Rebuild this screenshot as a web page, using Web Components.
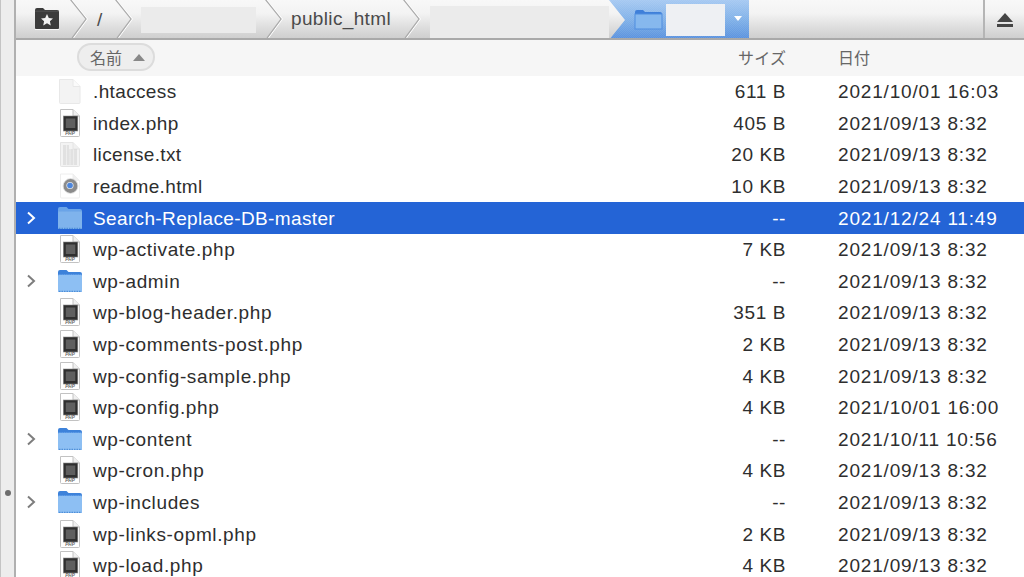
<!DOCTYPE html>
<html><head><meta charset="utf-8"><title>Files</title>
<style>html,body{margin:0;height:577px;overflow:hidden;background:#fff}</style></head>
<body><ftp-browser></ftp-browser>
<script>
const SANS='"Liberation Sans",Arial,"Noto Sans CJK JP",sans-serif';
class FileIcon extends HTMLElement{
  connectedCallback(){
    const t=this.getAttribute('type')||'blank';
    const doc=(fill,stroke,top,bot)=>`<path d="M3.5 ${top}H16L22.5 ${top+6.5}V${bot-1}Q22.5 ${bot} 21.5 ${bot}H4.5Q3.5 ${bot} 3.5 ${bot-1}Z" fill="${fill}" stroke="${stroke}"/><path d="M16 ${top}V${top+6.5}H22.5" fill="#f0f0f0" stroke="${stroke}"/>`;
    let body='';
    if(t==='blank') body=`<path d="M2.5 3.5H16L23 10.5V26.5Q23 27.5 22 27.5H3.5Q2.5 27.5 2.5 26.5Z" fill="#f3f3f3" stroke="#e8e8e8"/><path d="M16 3.5V10.5H23" fill="#fbfbfb" stroke="#e8e8e8"/>`;
    if(t==='php') body=doc('#fff','#c2c2c2',1.5,28.5)+`<rect x="6.3" y="8" width="14.5" height="15" fill="#2f2f2f" stroke="#8a8a8a" stroke-width=".6"/><rect x="8.8" y="10.5" width="9.5" height="9.5" fill="#5f5f5f"/><text x="13" y="27" font-size="4.6" font-family="Liberation Sans" font-weight="700" font-style="italic" fill="#666" text-anchor="middle">PHP</text>`;
    if(t==='txt') body=doc('#f3f3f3','#e4e4e4',3.5,27.5)+[7,9,11,13,15,17,19,21,23,25].map((y,i)=>`<path d="M6 ${y}H${i<2?12:20}" stroke="#cfcfcf" stroke-width="1" stroke-dasharray="3 .7"/>`).join('');
    if(t==='html') body=doc('#fff','#eeeeee',3,27)+`<circle cx="13.5" cy="15" r="7.2" fill="#8b8b8b"/><circle cx="13.5" cy="15" r="7.4" fill="none" stroke="#d2d2d2" stroke-width=".7"/><circle cx="13" cy="14.5" r="3.6" fill="#dfe5ec"/><circle cx="13" cy="14.5" r="2.8" fill="#4d86dc"/>`;
    if(t==='folder'||t==='folder-sel'){
      const s=t==='folder-sel';
      body=`<path d="M1 6Q1 4 3 4H9.5L11.5 6H23Q25 6 25 8V24.5Q25 26 23.5 26H2.5Q1 26 1 24.5Z" fill="${s?'#6aa4e8':'#3d82da'}"/>
      <rect x="1" y="8.5" width="24" height="17.5" rx="1.5" fill="${s?'#7fb3ec':'#8dbff3'}"/>
      <path d="M1 8.5H25" stroke="${s?'#74aae8':'#4f90e2'}" stroke-dasharray="1.5 .8"/>
      <path d="M2 25.3H24" stroke="#4f8fd8" stroke-width="1.2" stroke-dasharray="1.5 1"/>`;
    }
    this.attachShadow({mode:'open'}).innerHTML=`<style>:host{display:block;width:26px;height:31px}svg{display:block}</style><svg width="26" height="31" viewBox="0 0 26 31">${body}</svg>`;
  }
}
class FileRow extends HTMLElement{
  connectedCallback(){
    const a=n=>this.getAttribute(n)||'';
    const sel=this.hasAttribute('selected'),dir=this.hasAttribute('dir');
    const ls=this.textContent.startsWith('wp-')?.62:.36;
    this.attachShadow({mode:'open'}).innerHTML=`<style>
      :host{display:flex;align-items:center;height:31.6px;color:${sel?'#fff':'#2e2e2e'};background:${sel?'#2464d6':'transparent'};font:19px ${SANS};white-space:nowrap}
      .arrow{width:25px;flex:none;display:flex;justify-content:center;padding-left:4px;box-sizing:border-box}
      file-icon{flex:none;margin:0 10px 0 16px}
      .name,.size,.date{padding-top:1px}
      .name{flex:1;letter-spacing:${ls}px}
      .size{width:137px;text-align:right;flex:none;letter-spacing:.6px}
      .date{width:238px;padding-left:52px;flex:none;box-sizing:border-box;letter-spacing:.82px}
      svg{display:block}
    </style>
    <div class="arrow">${dir?`<svg width="10" height="14" viewBox="0 0 10 14"><path d="M2 1.5L8 7L2 12.5" fill="none" stroke="${sel?'#fff':'#7d7d7d'}" stroke-width="2"/></svg>`:'<svg width="10" height="14"></svg>'}</div>
    <file-icon type="${a('icon')}"></file-icon>
    <span class="name"><slot></slot></span><span class="size">${a('size')}</span><span class="date">${a('date')}</span>`;
  }
}
class PathCrumb extends HTMLElement{
  connectedCallback(){
    this.attachShadow({mode:'open'}).innerHTML=`<style>
      :host{display:flex;align-items:center;flex:none;height:100%;font:19px ${SANS};color:#4a4a4a;letter-spacing:.35px}
      .c{flex:1;display:flex;align-items:center;min-width:0;height:100%}
      svg{flex:none;display:block}
    </style><div class="c"><slot></slot></div>
    <svg width="20" height="39" viewBox="0 0 20 39"><path d="M2 0L18.5 20L4.5 39" fill="none" stroke="#fff" stroke-width="1" transform="translate(1 0)"/><path d="M2 0L18 20L4 39" fill="none" stroke="#a9a9a9" stroke-width="1.2"/></svg>`;
  }
}
class PathBar extends HTMLElement{
  connectedCallback(){
    this.attachShadow({mode:'open'}).innerHTML=`<style>
      :host{display:flex;height:40px;box-sizing:border-box;border-bottom:2px solid #a9a9a9;background:linear-gradient(#f8f8f8,#f3f3f3 35%,#dcdcdc 75%,#cfcfcf);overflow:hidden}
      .blue{flex:none;width:140px;height:40px;background:repeating-conic-gradient(#ffffff14 0 25%,#0000 0 50%) 0 0/2px 2px,linear-gradient(#a6c9f2,#7fb0e8 50%,#5790de);clip-path:polygon(0 0,100% 0,100% 100%,0 100%,16px 50%);display:flex;align-items:center;box-sizing:border-box;padding-left:25px}
      .blue svg{flex:none}
      .blue .m{width:59px;height:32px;background:#eef0f3;margin-left:3px;flex:none}
      .drop{width:0;height:0;border:4px solid transparent;border-top:5px solid #fff;border-bottom:0;margin-left:9px;margin-top:-4px}
      .spacer{flex:1}
      .eject{flex:none;width:41px;box-sizing:border-box;border-left:2px solid #b5b5b5;display:flex;align-items:center;justify-content:center;height:40px}
      path-crumb:nth-of-type(1){width:72px}
      path-crumb:nth-of-type(2){width:45px}
      path-crumb:nth-of-type(3){width:150px}
      path-crumb:nth-of-type(4){width:138px}
      .home{margin-left:19px}
      .sl{margin-left:9px;padding-top:2px}
      .ma{width:115px;height:26px;margin:2px 0 0 8px;background:#ebebeb}
      .pub{margin-left:8px}
      .tail{flex:none;width:188px;display:flex;align-items:flex-start;height:38px}
      .tm{width:179px;height:32px;margin:6px 0 0 9px;background:#ebebeb}
    </style>
    <path-crumb><svg class="home" width="24" height="23" viewBox="0 0 24 23"><path d="M0 3Q0 1 2 1H8L10 3H22Q24 3 24 5V21Q24 22 23 22H1Q0 22 0 21Z" fill="#3c3c3c"/><path d="M0 4.2H24" stroke="#555" stroke-width="1"/><path d="M0 22.5H24" stroke="#f8f8f8"/><path d="M12 7l1.8 3.9 4.2.5-3.1 2.8.9 4.2-3.8-2.2-3.8 2.2.9-4.2-3.1-2.8 4.2-.5z" fill="#f2f2f2"/></svg></path-crumb>
    <path-crumb><span class="sl">/</span></path-crumb>
    <path-crumb><div class="ma"></div></path-crumb>
    <path-crumb><span class="pub">public_html</span></path-crumb>
    <div class="tail"><div class="tm"></div></div>
    <div class="blue"><svg width="29" height="24" viewBox="0 0 29 24"><path d="M1 4Q1 2 3 2H9L11 4H26Q28 4 28 6V21H1Z" fill="#3f7fd9"/><rect x="1" y="6" width="27" height="15" fill="#86b8ee" stroke="#4f8ddf"/></svg><div class="m"></div><div class="drop"></div></div>
    <div class="spacer"></div>
    <div class="eject"><svg width="18" height="17" viewBox="0 0 18 17"><path d="M9 1L17 10H1Z" fill="#444"/><rect x="1" y="12" width="16" height="3" fill="#444"/></svg></div>`;
  }
}
class ColHeader extends HTMLElement{
  connectedCallback(){
    this.attachShadow({mode:'open'}).innerHTML=`<style>
      :host{display:flex;align-items:center;box-sizing:border-box;height:36.6px;padding-bottom:1px;background:#f6f6f6;padding-left:61px;font:16px "Noto Sans CJK JP",${SANS};color:#666;white-space:nowrap}
      .pill{flex:none;display:flex;align-items:center;gap:11px;box-sizing:border-box;width:78px;height:28px;border:2px solid #dcdcdc;border-radius:14px;background:#eeeeee;padding-left:11px}
      .tri{width:0;height:0;border:6px solid transparent;border-bottom:7px solid #888;border-top:0}
      .sp{flex:1}.s{flex:none;width:49px;margin-right:51px;letter-spacing:.3px}.d{flex:none;width:186px;letter-spacing:0}
    </style><div class="pill"><span>名前</span><span class="tri"></span></div><div class="sp"></div><span class="s">サイズ</span><span class="d">日付</span>`;
  }
}
class FtpBrowser extends HTMLElement{
  connectedCallback(){
    const rows=[['.htaccess','blank','611 B','2021/10/01 16:03'],['index.php','php','405 B','2021/09/13 8:32'],['license.txt','txt','20 KB','2021/09/13 8:32'],['readme.html','html','10 KB','2021/09/13 8:32'],['Search-Replace-DB-master','folder-sel','--','2021/12/24 11:49',1,1],['wp-activate.php','php','7 KB','2021/09/13 8:32'],['wp-admin','folder','--','2021/09/13 8:32',1],['wp-blog-header.php','php','351 B','2021/09/13 8:32'],['wp-comments-post.php','php','2 KB','2021/09/13 8:32'],['wp-config-sample.php','php','4 KB','2021/09/13 8:32'],['wp-config.php','php','4 KB','2021/10/01 16:00'],['wp-content','folder','--','2021/10/11 10:56',1],['wp-cron.php','php','4 KB','2021/09/13 8:32'],['wp-includes','folder','--','2021/09/13 8:32',1],['wp-links-opml.php','php','2 KB','2021/09/13 8:32'],['wp-load.php','php','4 KB','2021/09/13 8:32']];
    this.attachShadow({mode:'open'}).innerHTML=`<style>
      :host{display:block;height:577px;width:1024px;overflow:hidden;background:#fff}
      .shell{display:flex;height:100%}
      .side{flex:none;width:16px;box-sizing:border-box;border-right:2px solid #b0b0b0;border-left:1px solid #c4c4c4;background:#ededed;display:flex;align-items:center;justify-content:center;padding-top:408px}
      .dot{width:6px;height:6px;border-radius:50%;background:#6d6d6d}
      .main{flex:1;min-width:0;display:flex;flex-direction:column}
      .list{overflow:hidden}
    </style><div class="shell"><div class="side"><div class="dot"></div></div><div class="main"><path-bar></path-bar><col-header></col-header><div class="list">${rows.map(r=>`<file-row icon="${r[1]}" size="${r[2]}" date="${r[3]}" ${r[4]?'dir':''} ${r[5]?'selected':''}>${r[0]}</file-row>`).join('')}</div></div></div>`;
  }
}
customElements.define('file-icon',FileIcon);
customElements.define('file-row',FileRow);
customElements.define('path-crumb',PathCrumb);
customElements.define('path-bar',PathBar);
customElements.define('col-header',ColHeader);
customElements.define('ftp-browser',FtpBrowser);
</script></body></html>
